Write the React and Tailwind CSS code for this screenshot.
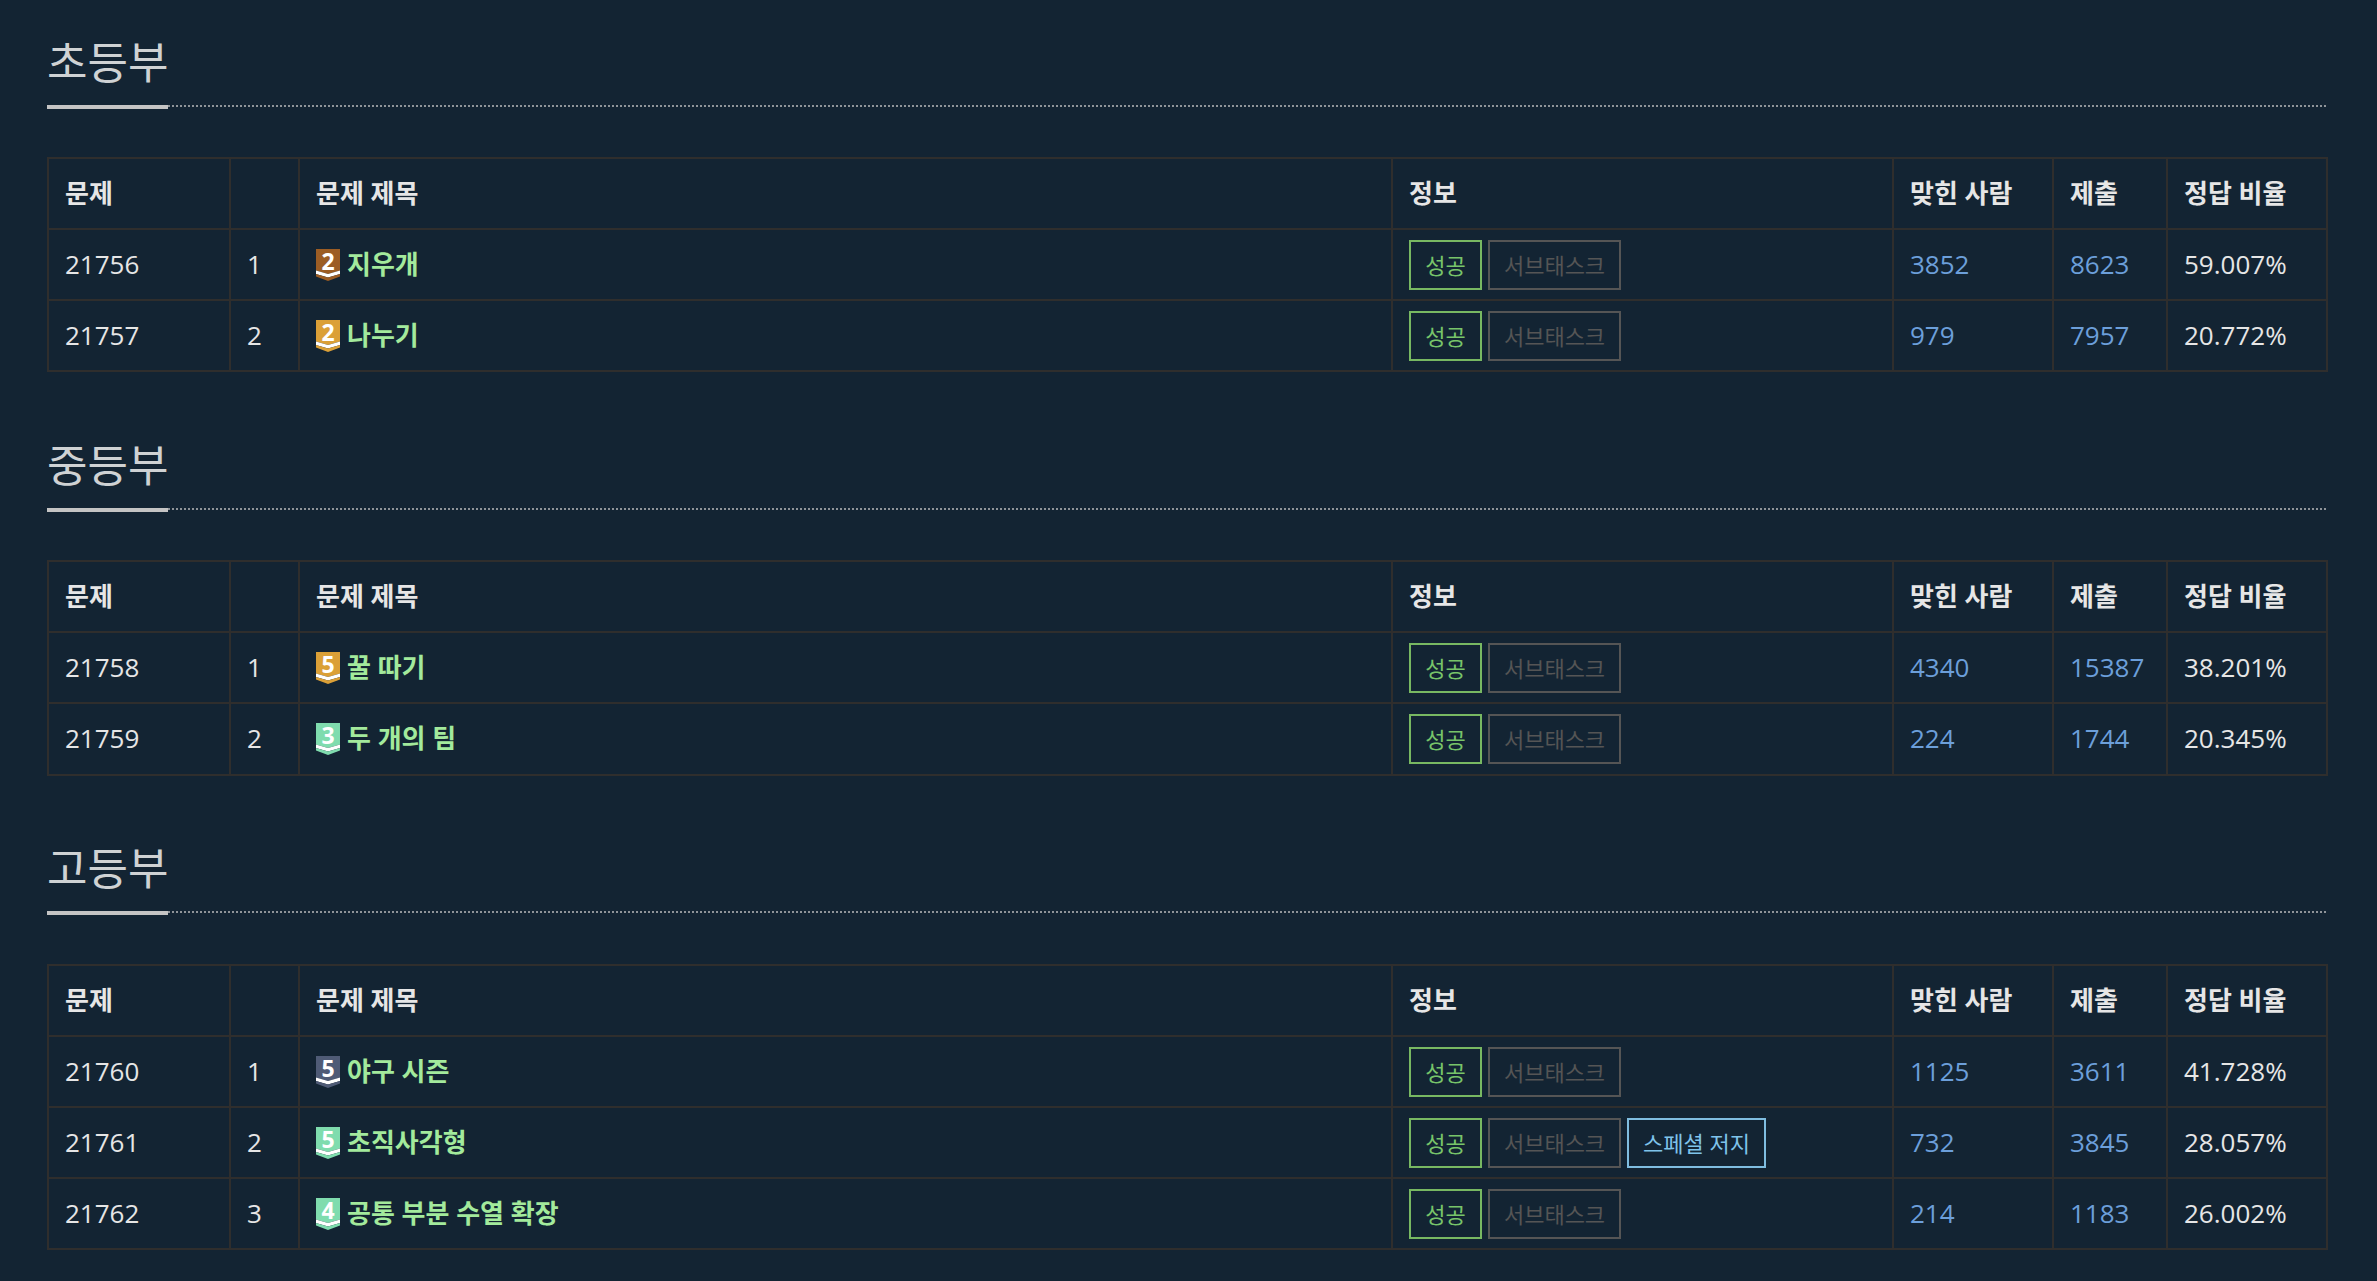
const FONT = { fontFamily: '"Open Sans","Noto Sans CJK KR",sans-serif' };

const TIER = { bronze: "#9c5d24", gold: "#dba037", silver: "#4f5b76", green: "#7fdcae" };

function Badge({ tier, n }) {
  const c = TIER[tier];
  return (
    <span className="relative block h-[32px] w-[24px] shrink-0">
      <svg width="24" height="32" viewBox="0 0 24 32" className="block">
        <path d="M0 0H24V21.5L12 25L0 21.5Z" fill={c} />
        <path d="M0 21.5L12 25L24 21.5V25L12 28.5L0 25Z" fill="#fff" />
        <path d="M0 25L12 28.5L24 25V27.5L12 32L0 27.5Z" fill={c} />
      </svg>
      <span className="absolute inset-x-0 top-0 flex h-[25px] items-center justify-center text-[23px] font-bold leading-none text-white">
        {n}
      </span>
    </span>
  );
}

function Label({ color, text, children, minW }) {
  return (
    <span className={`inline-flex h-[50px] items-center justify-center whitespace-nowrap border-2 px-[14px] text-[22px] leading-none ${minW || ""} ${color} ${text}`}>
      {children}
    </span>
  );
}

function Row({ r, tall }) {
  const td = `border-2 border-[#2f2e2d] px-4 align-middle ${tall ? "pb-[1px]" : ""}`;
  return (
    <tr className={tall ? "h-[72px]" : "h-[71px]"}>
      <td className={td}>{r.id}</td>
      <td className={td}>{r.no}</td>
      <td className={td}>
        <div className="flex items-center gap-[7px]">
          <Badge tier={r.tier} n={r.lv} />
          <span className="font-bold text-[#a3ea9c]">{r.title}</span>
        </div>
      </td>
      <td className={td}>
        <div className="flex gap-[6px]">
          <Label minW="w-[73px]" color="border-[#78b862]" text="text-[#78c46a]">성공</Label>
          <Label minW="w-[133px]" color="border-[#555555]" text="text-[#555555]">서브태스크</Label>
          {r.special && <Label minW="w-[139px]" color="border-[#7fbde0]" text="text-[#7fc3ea]">스페셜 저지</Label>}
        </div>
      </td>
      <td className={`${td} text-[#6c9fda]`}>{r.solved}</td>
      <td className={`${td} text-[#6c9fda]`}>{r.sub}</td>
      <td className={td}>{r.rate}</td>
    </tr>
  );
}

function Section({ title, rows, top, tableTop, tallLast }) {
  const th = "border-2 border-[#2f2e2d] px-4 text-left font-bold align-middle";
  return (
    <section className={top}>
      <div className="flex items-start">
        <h3 className="h-[109px] w-[121px] shrink-0 whitespace-nowrap border-b-4 border-[#c4c4c4] pt-[32px] text-[44px] font-normal leading-[60px] text-[#cfd2d4]">
          {title}
        </h3>
        <div className="h-[107px] flex-1 border-b-2 border-dotted border-[#8f9499]" />
      </div>
      <table className={`${tableTop} w-full table-fixed border-collapse text-[26px] text-[#e6e6e6]`}>
        <colgroup>
          <col className="w-[182px]" />
          <col className="w-[69px]" />
          <col className="w-[1093px]" />
          <col className="w-[501px]" />
          <col className="w-[160px]" />
          <col className="w-[114px]" />
          <col className="w-[160px]" />
        </colgroup>
        <thead>
          <tr className="h-[71px]">
            <th className={th}>문제</th>
            <th className={th}></th>
            <th className={th}>문제 제목</th>
            <th className={th}>정보</th>
            <th className={th}>맞힌 사람</th>
            <th className={th}>제출</th>
            <th className={th}>정답 비율</th>
          </tr>
        </thead>
        <tbody>
          {rows.map((r, i) => <Row key={r.id} r={r} tall={tallLast && i === rows.length - 1} />)}
        </tbody>
      </table>
    </section>
  );
}

const DATA = [
  { title: "초등부", top: "", tableTop: "mt-[48px]", rows: [
    { id: 21756, no: 1, tier: "bronze", lv: 2, title: "지우개", solved: 3852, sub: 8623, rate: "59.007%" },
    { id: 21757, no: 2, tier: "gold", lv: 2, title: "나누기", solved: 979, sub: 7957, rate: "20.772%" },
  ]},
  { title: "중등부", top: "mt-[31px]", tableTop: "mt-[48px]", tallLast: true, rows: [
    { id: 21758, no: 1, tier: "gold", lv: 5, title: "꿀 따기", solved: 4340, sub: 15387, rate: "38.201%" },
    { id: 21759, no: 2, tier: "green", lv: 3, title: "두 개의 팀", solved: 224, sub: 1744, rate: "20.345%" },
  ]},
  { title: "고등부", top: "mt-[30px]", tableTop: "mt-[49px]", rows: [
    { id: 21760, no: 1, tier: "silver", lv: 5, title: "야구 시즌", solved: 1125, sub: 3611, rate: "41.728%" },
    { id: 21761, no: 2, tier: "green", lv: 5, title: "초직사각형", solved: 732, sub: 3845, rate: "28.057%", special: true },
    { id: 21762, no: 3, tier: "green", lv: 4, title: "공통 부분 수열 확장", solved: 214, sub: 1183, rate: "26.002%" },
  ]},
];

export default function App() {
  return (
    <div className="h-[1281px] overflow-hidden bg-[#132433] pl-[47px] pr-[51px]" style={FONT}>
      {DATA.map((s) => <Section key={s.title} title={s.title} rows={s.rows} top={s.top} tableTop={s.tableTop} tallLast={s.tallLast} />)}
    </div>
  );
}
